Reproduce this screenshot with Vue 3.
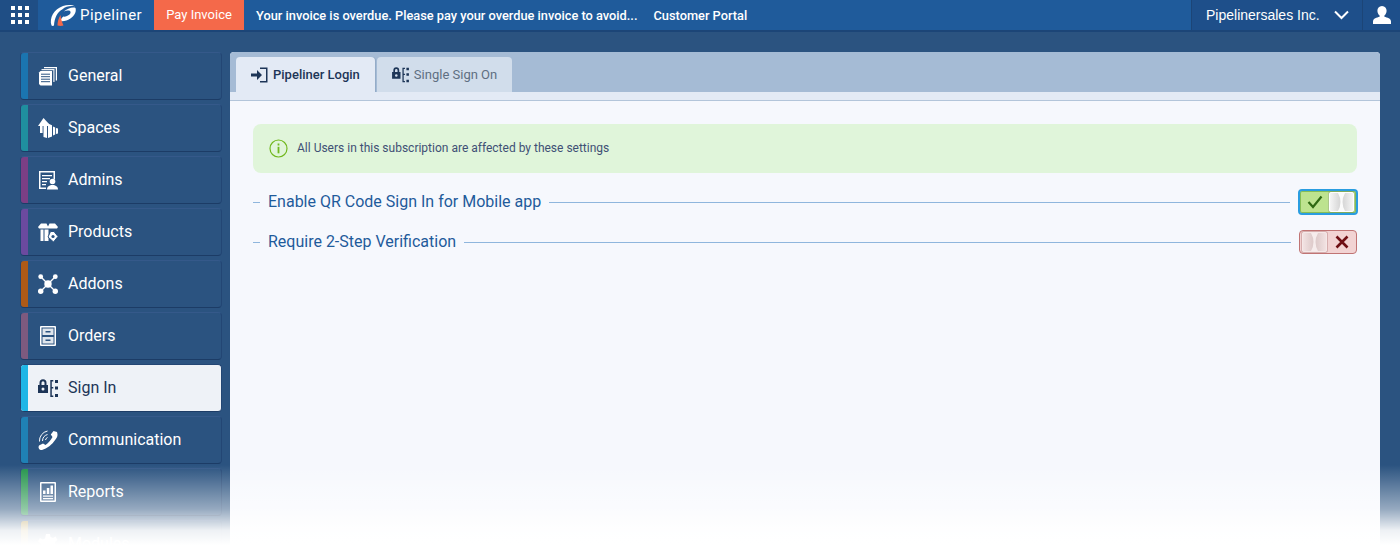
<script setup>
const items = [
  { label: 'General', color: '#1b75b0', icon: 'general' },
  { label: 'Spaces', color: '#1f8f9f', icon: 'spaces' },
  { label: 'Admins', color: '#7b3f85', icon: 'admins' },
  { label: 'Products', color: '#6b4a9f', icon: 'products' },
  { label: 'Addons', color: '#ae5a17', icon: 'addons' },
  { label: 'Orders', color: '#7d5a7f', icon: 'orders' },
  { label: 'Sign In', color: '#1fb6e6', icon: 'signin', active: true },
  { label: 'Communication', color: '#1f81b5', icon: 'comm' },
  { label: 'Reports', color: '#22934a', icon: 'reports' },
  { label: 'Modules', color: '#a8892f', icon: 'modules' }
]
const dots = []
for (let y = 0; y < 3; y++) for (let x = 0; x < 3; x++) dots.push({ x: 2 + x * 7, y: 1 + y * 7 })
</script>

<template>
  <div class="page">
    <header class="top">
      <div class="apps">
        <svg width="20" height="20" viewBox="0 0 20 20"><rect v-for="(d, i) in dots" :key="i" :x="d.x" :y="d.y" width="4" height="4" fill="#fff" /></svg>
      </div>
      <div class="brand">
        <svg width="27" height="24" viewBox="0 0 27 24" class="logo">
          <path d="M2.500 22.500C0 15 5 6 14 3c4-1.300 9-1.300 12 .3-5-.8-9.500.2-12.500 3C8 9.500 5.500 15 5 22.500c-.8.500-1.800.500-2.500 0z" fill="#fff" />
          <path d="M26.500 5c1.500 5-3 10.500-9 12.500-2.300.8-4.500 1-6.500.6 1-2 2-3.500 3.500-4.500 2 .2 4.500-.6 6-2 1.500-1.600 1.500-3.600-.5-4-1.800-.3-3.500.1-5.200 1 3-3 9.200-5 11.700-3.600z" fill="#fff" />
          <path d="M8.500 22.500c0-3.500.8-7 3-10.500.4 3.500 1.400 7 3 10.500-2 .6-4 .6-6 0z" fill="#f2694a" />
        </svg>
        <span class="brand-name">Pipeliner</span>
      </div>
      <a class="pay">Pay Invoice</a>
      <span class="notice">Your invoice is overdue. Please pay your overdue invoice to avoid...</span>
      <span class="portal">Customer Portal</span>
      <div class="spacer"></div>
      <div class="company">
        <span class="company-name">Pipelinersales Inc.</span>
        <svg width="15" height="10" viewBox="0 0 15 10"><path d="M1 1.500 7.500 8 14 1.500" fill="none" stroke="#fff" stroke-width="2" /></svg>
      </div>
      <div class="user">
        <svg width="20" height="20" viewBox="0 0 20 20"><path d="M10 1c3 0 4.600 2.200 4.600 4.800 0 2-1 3.800-2.200 4.800v1.200c2.800.8 6.600 1.700 6.600 4.700V19H1v-2.500c0-3 3.800-3.900 6.600-4.700v-1.200C6.400 9.600 5.400 7.800 5.400 5.800 5.400 3.200 7 1 10 1z" fill="#fff" /></svg>
      </div>
    </header>

    <div class="body">
      <nav class="side">
        <div v-for="it in items" :key="it.label" class="item" :class="{ active: it.active }">
          <span class="bar" :style="{ background: it.color }"></span>
          <span class="ico">
            <svg width="20" height="20" viewBox="0 0 20 20" fill="currentColor">
              <template v-if="it.icon === 'general'">
                <path d="M6 1h13v13.500h-1.200V2.200H6z" />
                <path d="M3.500 3h13v13h-1.200V4.200H3.500z" opacity=".9" />
                <path d="M1 6.500 2.500 5H14v14.500H2.500L1 18z" />
                <path d="M3 8.200h9M3 10.700h9M3 13.200h9M3 15.700h9" stroke="#2b5380" stroke-width="1" />
              </template>
              <template v-else-if="it.icon === 'spaces'">
                <path d="M0 8 5.500 0 11 6v2H0z" />
                <path d="M2 8h2.600v7H2zM5.500 8H9v12l-3.500-1zM10 5.500l4 1.800V18.500L10 20zM15 8.500l2.200 1v7l-2.200 1zM18 10l2 .6v4.800l-2 .6z" />
              </template>
              <template v-else-if="it.icon === 'admins'">
                <path d="M1 1h16v8.500h-1.500v-7h-13v15H8V19H1z" />
                <path d="M4 5h10v1.300H4zM4 8h8v1.300H4zM4 11h5v1.300H4zM4 14h4v1.300H4z" />
                <circle cx="14.500" cy="11.500" r="2.800" />
                <path d="M9 19.500c0-3 2.500-4.500 5.500-4.500s5.500 1.500 5.500 4.500z" />
              </template>
              <template v-else-if="it.icon === 'products'">
                <path d="M0 5 3 1.500h5.500L10 4.500l1.500-3H17L20 5l-1 1.500H1z" />
                <path d="M2.500 7.500h3V19h-3zM6.500 7.500h4V19h-4z" />
                <path d="M12.500 9.500h3.500l4 5-4.500 5.500-5.500-5z" stroke="#2b5380" stroke-width="1" />
                <circle cx="15" cy="14.500" r="1.600" fill="#2b5380" />
              </template>
              <template v-else-if="it.icon === 'addons'">
                <path d="M3 3l14 14M17 3 3 17" stroke="currentColor" stroke-width="1.400" />
                <circle cx="10" cy="10" r="3.700" />
                <circle cx="2.700" cy="2.700" r="2.400" />
                <circle cx="17.300" cy="2.700" r="2.400" />
                <circle cx="2.700" cy="17.300" r="2.700" />
                <circle cx="17.300" cy="17.300" r="2.700" />
              </template>
              <template v-else-if="it.icon === 'orders'">
                <path fill-rule="evenodd" d="M3 0h14a1 1 0 0 1 1 1v18a1 1 0 0 1-1 1H3a1 1 0 0 1-1-1V1a1 1 0 0 1 1-1zm.500 1.500v17h13v-17z" />
                <path d="M4.500 2.500h11v6.500h-11zM4.500 11h11v6.500h-11z" opacity=".85" />
                <path d="M7.500 5h5v1.500h-5zM7.500 13.500h5V15h-5z" fill="#2b5380" />
              </template>
              <template v-else-if="it.icon === 'signin'">
                <path d="M0 7h10v8H0z M1.500 7V4.800a3.500 3.500 0 0 1 7 0V7H6.500V4.800a1.500 1.500 0 0 0-3 0V7z" />
                <circle cx="5" cy="11" r="1.500" fill="#eef2f7" />
                <path d="M12.300 2h3v1.500h-1.500v5.500h1.500v1.500h-1.500v7h1.500V19h-3z" />
                <path d="M17 2h3v3h-3zM17 8.500h3v3h-3zM17 16h3v3h-3z" />
              </template>
              <template v-else-if="it.icon === 'comm'">
                <path d="M15.500 1 19 2c1 3 .5 5-1.500 7.500C14 15 9 18.500 4 20c-2 .3-3.500-1-3.500-3L1 15.500l4-2 2.500 1.500c2.500-1.500 5.500-5 7-8l-1.700-2.500z" />
                <path d="M1.500 11.500A10 10 0 0 1 9.500 1M4.500 11A7 7 0 0 1 9.500 4.500M7.500 10A3.500 3.500 0 0 1 9.500 7.500" fill="none" stroke="currentColor" stroke-width="1" />
              </template>
              <template v-else-if="it.icon === 'reports'">
                <path fill-rule="evenodd" d="M3 0h14a1 1 0 0 1 1 1v18a1 1 0 0 1-1 1H3a1 1 0 0 1-1-1V1a1 1 0 0 1 1-1zm.500 1.500v17h13v-17z" />
                <path d="M5 8.500h2.500V12H5zM8.800 6h2.500v6H8.800zM12.500 3.500H15V12h-2.500zM5 13.500h10v1.200H5zM5 16h10v1.200H5z" />
              </template>
              <template v-else>
                <path d="M8 0h4l.5 3 2.500 1 2.500-1.500 2 3.500-2.500 2v2.500l2.500 2-2 3.500-2.500-1.500-2.500 1L12 20H8l-.5-3-2.500-1-2.500 1.500-2-3.500 2.500-2V9.500L0 7.500 2 4l2.500 1.500L7 4.500z" />
              </template>
            </svg>
          </span>
          <span class="label">{{ it.label }}</span>
        </div>
      </nav>

      <main class="panel">
        <div class="tabs">
          <div class="tab on">
            <svg width="17" height="16" viewBox="0 0 17 16" fill="#1d3557">
              <path d="M0 6.500h6V3l5 5-5 5V9.500H0z" />
              <path d="M9 .5h7.500v15H9v-1.500h6V2H9z" />
            </svg>
            <span>Pipeliner Login</span>
          </div>
          <div class="tab">
            <svg width="17" height="16" viewBox="0 0 20 19" fill="#1d3557">
              <path d="M0 6h10v8H0z M1.500 6V3.800a3.500 3.500 0 0 1 7 0V6H6.500V3.800a1.500 1.500 0 0 0-3 0V6z" />
              <circle cx="5" cy="10" r="1.500" fill="#d0dcea" />
              <path d="M12.300 1h3v1.500h-1.500V8h1.500v1.500h-1.500v7h1.500V18h-3z" />
              <path d="M17 1h3v3h-3zM17 7.500h3v3h-3zM17 15h3v3h-3z" />
            </svg>
            <span>Single Sign On</span>
          </div>
        </div>
        <div class="band"></div>
        <div class="content">
          <div class="info">
            <svg width="19" height="19" viewBox="0 0 19 19">
              <circle cx="9.500" cy="9.500" r="8.500" fill="none" stroke="#72b81f" stroke-width="1.200" />
              <rect x="8.600" y="4.500" width="1.800" height="2" fill="#72b81f" />
              <rect x="8.600" y="7.800" width="1.800" height="6.500" fill="#72b81f" />
            </svg>
            <span class="info-text">All Users in this subscription are affected by these settings</span>
          </div>

          <div class="setting first">
            <span class="dash"></span>
            <span class="name">Enable QR Code Sign In for Mobile app</span>
            <span class="line"></span>
            <div class="toggle yes">
              <span class="mark">
                <svg width="16" height="14" viewBox="0 0 16 14"><path d="M1.500 7 6 12 14.500 1.500" fill="none" stroke="#2f6a12" stroke-width="2.200" /></svg>
              </span>
              <span class="knob">
                <svg width="23" height="18" viewBox="0 0 23 18"><path d="M8 0h7q-5 9 0 18H8q5-9 0-18z" fill="#fbfbfb" /></svg>
              </span>
            </div>
          </div>
          <div class="setting">
            <span class="dash"></span>
            <span class="name">Require 2-Step Verification</span>
            <span class="line"></span>
            <div class="toggle no">
              <span class="knob">
                <svg width="23" height="18" viewBox="0 0 23 18"><path d="M8 0h7q-5 9 0 18H8q5-9 0-18z" fill="#f6ecec" /></svg>
              </span>
              <span class="mark">
                <svg width="14" height="14" viewBox="0 0 14 14"><path d="M1.500 1.500l11 11M12.500 1.500l-11 11" fill="none" stroke="#6f0f14" stroke-width="2.600" /></svg>
              </span>
            </div>
          </div>
        </div>
      </main>
    </div>
    <div class="fade"></div>
  </div>
</template>

<style>
html, body { margin: 0; height: 100%; overflow: hidden; background: #fff; }
</style>

<style scoped>
.page {
  position: relative;
  width: 1400px;
  height: 545px;
  overflow: hidden;
  background: #2b5380;
  font-family: Roboto, "Liberation Sans", sans-serif;
}
.top {
  display: flex;
  align-items: center;
  height: 30px;
  background: #1f5b9b;
  border-bottom: 2px solid #1c4577;
  color: #fff;
  font-size: 13px;
}
.apps {
  width: 38px;
  height: 30px;
  background: #1f4e85;
  display: flex;
  align-items: center;
  justify-content: center;
  flex: none;
}
.brand {
  width: 116px;
  display: flex;
  align-items: center;
  height: 30px;
  flex: none;
}
.logo { margin-left: 11px; }
.brand-name { margin-left: 4px; font-size: 15px; letter-spacing: .45px; }
.pay {
  width: 90px;
  height: 30px;
  line-height: 30px;
  text-align: center;
  background: #f4694a;
  font-size: 13px;
  flex: none;
}
.notice { margin-left: 12px; font-size: 12.800px; font-weight: 500; white-space: nowrap; }
.portal { margin-left: 16px; font-size: 12.800px; font-weight: 500; white-space: nowrap; }
.spacer { flex: 1; }
.company {
  width: 171px;
  height: 30px;
  box-sizing: border-box;
  padding: 0 13px 0 14px;
  display: flex;
  align-items: center;
  justify-content: space-between;
  background: #1e4f8a;
  border-left: 1px solid #1c4577;
  font-family: "Liberation Sans", Arial, sans-serif;
  font-size: 14px;
  flex: none;
}
.company-name { white-space: nowrap; }
.user {
  width: 38px;
  height: 30px;
  background: #1e4f8a;
  border-left: 1px solid #1c4577;
  box-sizing: border-box;
  display: flex;
  align-items: center;
  justify-content: center;
  flex: none;
}
.body {
  display: flex;
  padding: 20px 20px 0;
  gap: 8px;
}
.side {
  width: 202px;
  display: flex;
  flex-direction: column;
  gap: 4px;
  flex: none;
}
.item {
  position: relative;
  display: flex;
  align-items: center;
  flex: none;
  height: 48px;
  box-sizing: border-box;
  background: #2b5380;
  border: 1px solid #234674;
  border-top-color: #35598a;
  border-bottom-color: #1c3c66;
  border-radius: 4px;
  color: #fff;
  overflow: hidden;
}
.item.active {
  background: #eef2f7;
  color: #1d3557;
  border-color: #234674;
  border-bottom-color: #1c3c66;
}
.bar { width: 7px; align-self: stretch; flex: none; }
.ico { margin-left: 10px; width: 20px; height: 20px; flex: none; display: flex; }
.label { margin-left: 10px; font-size: 16px; line-height: 20px; }
.panel {
  width: 1150px;
  height: 520px;
  flex: none;
  background: #f6f8fd;
  border-radius: 4px 4px 0 0;
  overflow: hidden;
}
.tabs {
  height: 40px;
  box-sizing: border-box;
  background: #a5bbd5;
  padding: 5px 0 0 6px;
  display: flex;
  gap: 2px;
}
.tab {
  height: 35px;
  box-sizing: border-box;
  display: flex;
  align-items: center;
  gap: 5px;
  padding: 0 15px;
  background: #d1ddeb;
  border-radius: 4px 4px 0 0;
  color: #5f6f82;
  font-size: 13px;
}
.tab.on {
  background: #e3eaf5;
  color: #1d3557;
  font-weight: 500;
  box-shadow: 1px 0 0 #94acc8;
}
.band {
  height: 8px;
  background: #e3eaf5;
  border-bottom: 1px solid #b3c5da;
}
.content { padding: 23px 23px 0; }
.info {
  height: 49px;
  background: #e0f5da;
  border-radius: 8px;
  display: flex;
  align-items: center;
  padding-left: 16px;
  gap: 9px;
  color: #3f5075;
  font-size: 12px;
}
.info-text { position: relative; top: -1px; }
.setting {
  display: flex;
  align-items: center;
  height: 26px;
  margin-top: 14px;
}
.setting.first { margin-top: 16px; }
.dash { width: 7px; height: 1px; background: #8fb6dd; margin-right: 8px; flex: none; }
.name { color: #1f5b9b; font-size: 16px; white-space: nowrap; margin-top: -2px; }
.line { flex: 1; height: 1px; background: #8fb6dd; margin: 0 8px; }
.toggle {
  box-sizing: border-box;
  display: flex;
  align-items: center;
  border-radius: 4px;
  flex: none;
}
.toggle.yes {
  width: 60px;
  height: 26px;
  background: #bde38f;
  border: 2px solid #2a9de0;
  box-shadow: inset 0 0 0 1px #86bd55;
  padding-right: 2px;
  margin-right: -1px;
}
.toggle.no {
  width: 58px;
  height: 24px;
  background: #f2d3d3;
  border: 1px solid #c07474;
  padding-left: 2px;
}
.mark { flex: 1; display: flex; justify-content: center; align-items: center; }
.knob {
  width: 25px;
  height: 20px;
  box-sizing: border-box;
  border: 1px solid #fff;
  border-radius: 2px;
  box-shadow: 0 0 0 1px rgba(120, 120, 120, .25);
  background: linear-gradient(90deg, #f5f5f5, #d9d9d9 40%, #d9d9d9 60%, #f5f5f5);
  display: flex;
  flex: none;
}
.toggle.no .knob {
  border-color: #f5e8e8;
  box-shadow: 0 0 0 1px rgba(150, 90, 90, .3);
  background: linear-gradient(90deg, #f2e2e2, #dfcccc 40%, #dfcccc 60%, #f2e2e2);
}
.fade {
  position: absolute;
  left: 0;
  right: 0;
  bottom: 0;
  height: 80px;
  background: linear-gradient(to bottom, rgba(255,255,255,0), rgba(255,255,255,.5) 55%, rgba(255,255,255,.92) 82%, #fff 100%);
  pointer-events: none;
}
</style>
